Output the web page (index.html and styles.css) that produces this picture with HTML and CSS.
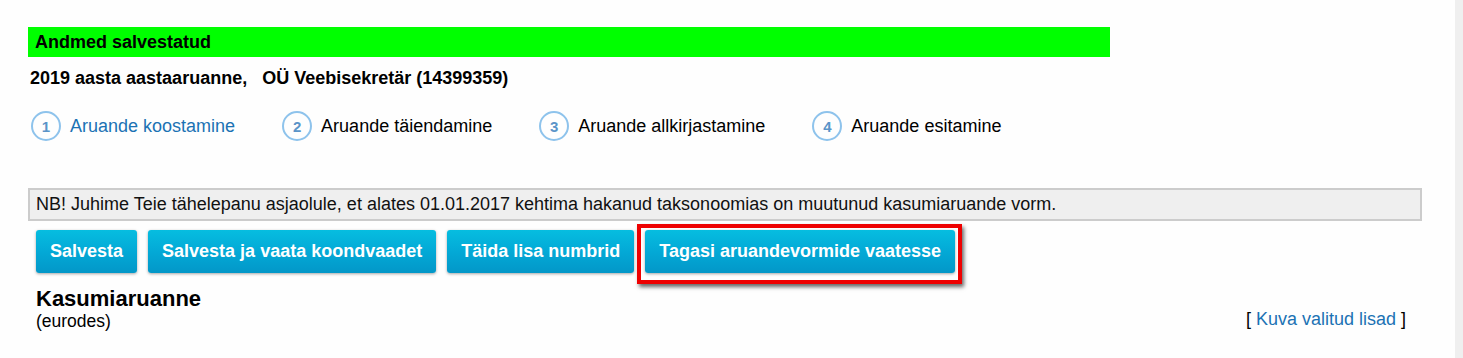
FILE: index.html
```html
<!DOCTYPE html>
<html lang="et">
<head>
<meta charset="utf-8">
<title>Kasumiaruanne</title>
<link rel="stylesheet" href="styles.css">
</head>
<body>
<div class="page">
  <main class="main">
    <div class="saved">Andmed salvestatud</div>
    <div class="title">2019 aasta aastaaruanne,&nbsp;&nbsp; OÜ Veebisekretär (14399359)</div>
    <ol class="steps">
      <li class="step active"><span class="num">1</span><span class="label">Aruande koostamine</span></li>
      <li class="step"><span class="num">2</span><span class="label">Aruande täiendamine</span></li>
      <li class="step"><span class="num">3</span><span class="label">Aruande allkirjastamine</span></li>
      <li class="step"><span class="num">4</span><span class="label">Aruande esitamine</span></li>
    </ol>
    <div class="notice">NB! Juhime Teie tähelepanu asjaolule, et alates 01.01.2017 kehtima hakanud taksonoomias on muutunud kasumiaruande vorm.</div>
    <div class="buttons">
      <button class="btn">Salvesta</button>
      <button class="btn">Salvesta ja vaata koondvaadet</button>
      <button class="btn">Täida lisa numbrid</button>
      <span class="highlight"><button class="btn">Tagasi aruandevormide vaatesse</button></span>
    </div>
    <div class="report">
      <div class="report-head">
        <h2 class="report-title">Kasumiaruanne</h2>
        <div class="unit">(eurodes)</div>
      </div>
      <div class="extras">[ <a class="link" href="#">Kuva valitud lisad</a> ]</div>
    </div>
  </main>
  <div class="scroll-strip"></div>
</div>
</body>
</html>
```
FILE: styles.css
```css
html, body {
  margin: 0;
  padding: 0;
  height: 100%;
  background: #fefefe;
}
body {
  font-family: "Liberation Sans", Arial, sans-serif;
  color: #000;
}
.page {
  display: flex;
  min-height: 358px;
}
.main {
  flex: 1;
  padding: 27px 0 0 28px;
}
.scroll-strip {
  width: 8px;
  background: #efefef;
}
.saved {
  width: 1075px;
  height: 30px;
  line-height: 30px;
  padding-left: 7px;
  background: #00ff00;
  font-size: 18px;
  font-weight: bold;
}
.title {
  margin-top: 11px;
  padding-left: 2px;
  font-size: 18px;
  line-height: 21px;
  font-weight: bold;
}
.steps {
  display: flex;
  align-items: center;
  list-style: none;
  margin: 22px 0 0 3px;
  padding: 0;
}
.step {
  display: flex;
  align-items: center;
  gap: 9px;
  margin-right: 47px;
  font-size: 18px;
  color: #000;
}
.step.active .label {
  color: #1b72b4;
}
.num {
  width: 26px;
  height: 26px;
  border: 2px solid #8ec3ec;
  border-radius: 50%;
  display: flex;
  align-items: center;
  justify-content: center;
  font-size: 15px;
  font-weight: bold;
  color: #5a94c8;
}
.notice {
  margin-top: 47px;
  width: 1378px;
  border: 2px solid #cccccc;
  background: #efefef;
  padding: 4px 6px;
  font-size: 18px;
  line-height: 21px;
  color: #111;
}
.buttons {
  display: flex;
  align-items: flex-start;
  gap: 11px;
  margin-top: 9px;
  padding-left: 8px;
}
.btn {
  height: 43px;
  padding: 0 14px;
  border: 0;
  border-radius: 3px;
  background: linear-gradient(to bottom, #06bde0 0%, #03a9d6 50%, #0397c8 100%);
  box-shadow: 0 1px 3px rgba(0, 0, 0, 0.35);
  color: #fff;
  font-family: "Liberation Sans", Arial, sans-serif;
  font-size: 18px;
  font-weight: bold;
  cursor: pointer;
}
.highlight {
  position: relative;
  display: inline-block;
}
.highlight::after {
  content: "";
  position: absolute;
  left: -8px;
  top: -6px;
  right: -7px;
  bottom: -11px;
  border: 4px solid #ee0000;
  box-shadow: 2px 3px 4px rgba(0, 0, 0, 0.6);
  pointer-events: none;
}
.report {
  display: flex;
  justify-content: space-between;
  align-items: flex-end;
  width: 1370px;
  padding-left: 8px;
  margin-top: 13px;
}
.report-title {
  margin: 0;
  font-size: 22px;
  line-height: 25px;
  font-weight: bold;
}
.unit {
  font-size: 17.5px;
  line-height: 20px;
}
.extras {
  font-size: 18px;
  line-height: 20px;
  padding-bottom: 2px;
}
.link {
  color: #1b72b4;
  text-decoration: none;
}
```
